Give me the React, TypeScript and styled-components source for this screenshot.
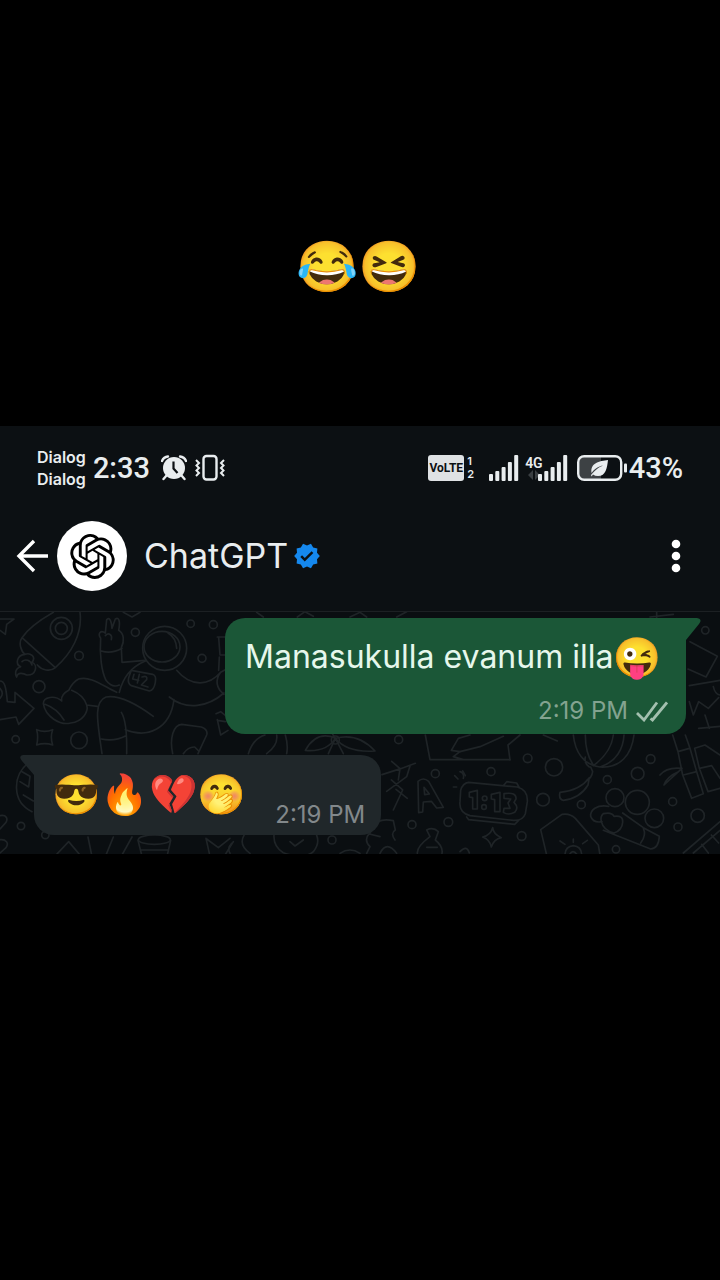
import React from "react";
import styled, { createGlobalStyle, css } from "styled-components";
import { SiOpenai } from "react-icons/si";
import { MdVerified } from "react-icons/md";

const GlobalStyle = createGlobalStyle`
  * { box-sizing: border-box; }
  body {
    margin: 0;
    background: #000;
    color: #e9edef;
    font-family: Inter, Roboto, "Noto Color Emoji", sans-serif;
  }
`;

const Page = styled.main`
  display: grid;
  grid-template-rows: 1fr auto 1fr;
  grid-template-columns: minmax(0, 1fr);
  min-height: 100vh;
`;

const Caption = styled.div`
  display: flex;
  align-items: flex-end;
  justify-content: center;
  padding: 0 3px 130px 0;
  font-size: 50px;
  line-height: 60px;
`;

const Phone = styled.section`
  background: #0c1013;
`;

const StatusBar = styled.div`
  display: flex;
  align-items: center;
  justify-content: space-between;
  padding: 20px 37px 22px;
`;

const StatusGroup = styled.div`
  display: flex;
  align-items: center;
`;

const Carriers = styled.div`
  display: flex;
  flex-direction: column;
  margin-right: 7px;
  font-size: 16px;
  font-weight: 600;
  line-height: 22px;
`;

const StatusText = styled.span`
  font-family: Roboto, sans-serif;
  font-size: 29px;
  font-weight: 500;
  line-height: 40px;
`;

const StatusIcon = styled.svg<{ $gap: number }>`
  display: block;
  margin-left: ${(p) => p.$gap}px;
`;

const Volte = styled.span`
  display: flex;
  justify-content: center;
  width: 36px;
  border-radius: 3px;
  background: #dfe2e4;
  color: #0c1013;
  font-family: Roboto, sans-serif;
  font-size: 12px;
  font-weight: 700;
  line-height: 26px;
`;

const SimSlots = styled.span`
  display: flex;
  flex-direction: column;
  margin-left: 3px;
  font-size: 11px;
  font-weight: 600;
  line-height: 13px;
`;

const NetworkType = styled.span`
  display: flex;
  flex-direction: column;
  align-items: center;
  margin: 0 -5px 0 6px;
  font-family: Roboto, sans-serif;
  font-size: 14px;
  font-weight: 600;
  line-height: 14px;
`;

const Header = styled.header`
  display: flex;
  align-items: center;
  padding: 9px 36px 20px 16px;
  border-bottom: 1px solid #1c2023;
`;

const IconButton = styled.button`
  display: flex;
  padding: 0;
  border: 0;
  background: none;
  color: #fff;
`;

const Avatar = styled.div`
  display: flex;
  align-items: center;
  justify-content: center;
  width: 70px;
  height: 70px;
  margin: 0 17px 0 8px;
  border-radius: 50%;
  background: #fff;
  color: #000;
`;

const Name = styled.h1`
  margin: 0;
  font-size: 34px;
  font-weight: 400;
  line-height: 44px;
`;

const Verified = styled.span`
  display: flex;
  flex: 1;
  margin-left: 5px;
  color: #1588ee;
`;

const Chat = styled.div`
  position: relative;
  display: flex;
  flex-direction: column;
  gap: 21px;
  overflow: hidden;
  padding: 6px 34px 19px;
  background: #0a0e11;
`;

const Wallpaper = styled.svg`
  position: absolute;
  inset: 0;
  width: 100%;
  height: 100%;
`;

const Bubble = styled.article<{ $sent?: boolean }>`
  position: relative;
  display: flex;
  border-radius: 20px;

  &::after {
    content: "";
    position: absolute;
    top: 0;
    width: 36px;
    height: 24px;
    background: inherit;
  }

  ${(p) =>
    p.$sent
      ? css`
          align-self: flex-end;
          flex-direction: column;
          gap: 14px;
          padding: 14px 18px 8px 20px;
          background: #1b5737;
          color: #e6f7ec;
          &::after {
            right: -15px;
            clip-path: path("M0 0H32Q38 1 34 6L21 22V24H0Z");
          }
        `
      : css`
          align-self: flex-start;
          gap: 29px;
          padding: 14px 16px 5px 18px;
          background: #20272a;
          &::after {
            left: -14px;
            clip-path: path("M36 0H3Q-2 1 2 6L14 20V24H36Z");
          }
        `}
`;

const MessageText = styled.p`
  display: flex;
  align-items: center;
  margin: 0;
  padding-right: 6px;
  font-size: 32px;
  line-height: 50px;
`;

/* Mirrored so that the open eye is on the left. */
const Emoji = styled.span`
  transform: scaleX(-1);
  font-size: 39px;
  line-height: 50px;
`;

const EmojiMessage = styled.p`
  margin: 0;
  padding-bottom: 11px;
  font-size: 39px;
  line-height: 50px;
`;

const Meta = styled.div<{ $sent?: boolean }>`
  display: flex;
  align-items: center;
  align-self: flex-end;
  gap: 8px;
  color: ${(p) => (p.$sent ? "#83a390" : "#82888b")};
  font-size: 24px;
  line-height: 30px;
`;

function SignalBars({ gap }: { gap: number }) {
  return (
    <StatusIcon $gap={gap} width="30" height="26" viewBox="0 0 30 26" fill="#e9edef" role="img" aria-label="Signal">
      <rect x="0" y="19" width="4" height="7" rx="1" />
      <rect x="6.3" y="16" width="4" height="10" rx="1" />
      <rect x="12.6" y="12" width="4" height="14" rx="1" />
      <rect x="18.9" y="7" width="4" height="19" rx="1" />
      <rect x="25.2" y="0" width="4" height="26" rx="1" />
    </StatusIcon>
  );
}

function Doodles() {
  return (
    <Wallpaper viewBox="0 0 720 242" preserveAspectRatio="xMidYMin slice" aria-hidden="true">
      <g fill="none" stroke="#1f2427" strokeWidth="5" strokeLinecap="round" strokeLinejoin="round">
        <g transform="translate(0 -7) scale(.33333)">
          {/* rocket */}
          <path d="M160 22C120 45 85 70 66 98L166 188C215 145 248 85 240 22M66 98C55 112 62 138 75 148M166 188C150 202 125 195 112 180" />
          <circle cx="184" cy="70" r="33" /><circle cx="184" cy="70" r="18" />
          <path d="M75 148C50 150 45 178 62 185C42 192 46 210 50 216C52 200 72 205 80 210C108 212 115 180 96 172C110 155 90 142 75 148M66 170C76 160 92 166 96 180" />
          <path d="M0 42H42L20 58L16 88L0 76M0 228C14 228 18 245 22 290L45 292V262L102 310L56 358L48 336L0 344M0 250C10 262 8 272 0 280" />
          {/* astronaut */}
          <path d="M302 100C292 85 302 74 316 84L320 44C326 36 334 42 336 70L346 42C356 36 362 46 356 76C372 85 374 108 364 128L366 172L436 166M302 100C298 150 305 200 318 226C330 242 345 246 358 240M316 92C326 82 338 88 334 104M304 138C325 145 345 142 366 130" />
          <circle cx="494" cy="130" r="66" /><ellipse cx="486" cy="125" rx="54" ry="46" /><path d="M504 84Q528 98 530 130M436 168C395 185 368 220 358 262M394 196L458 208Q470 212 466 232Q462 256 448 258L394 242Q382 236 386 218ZM402 208L398 222L416 226M418 208L412 234M426 216Q444 210 440 224L424 240L444 246" />
          <path d="M350 262C305 240 270 212 236 222C220 230 212 244 206 256C180 270 185 282 185 288C165 270 130 275 130 296C136 335 180 362 212 354C250 350 266 318 260 300L292 304M135 298Q170 310 192 345M215 256Q250 270 260 300" />
          <path d="M460 334C400 290 350 270 318 276C280 290 292 350 306 446M304 402Q345 410 378 392M364 322Q382 350 380 446M376 374C440 400 510 375 522 284M508 276C560 318 625 305 672 264M530 196C575 250 630 240 662 202C645 225 648 250 672 268M662 202L684 190M652 96H684M656 98L660 150H684M658 156L656 196M648 326L662 320L684 338M652 344L662 390L684 376M652 346L676 350" />
          <path d="M518 446C508 400 520 360 545 358L604 366Q625 374 620 390L594 446M550 446Q565 425 584 426L596 438M370 22L396 36L420 22" />
          <circle cx="237" cy="152" r="13" /><circle cx="117" cy="245" r="18" /><circle cx="47" cy="403" r="11" /><circle cx="237" cy="406" r="25" /><circle cx="406" cy="82" r="12" /><circle cx="572" cy="56" r="11" /><circle cx="640" cy="59" r="12" /><circle cx="606" cy="160" r="12" />
          <path d="M110 374Q134 384 158 374Q150 396 158 420Q134 412 110 420Q116 396 110 374Z" />
          {/* ball and lower edge */}
          <path d="M90 470C35 510 35 590 96 620M66 500L90 514L86 546L60 530M70 570L100 588M0 632C20 628 24 642 18 652L0 672M0 704C18 702 28 714 18 728L0 744M168 750L206 710L240 750M264 696L275 750M318 750L340 696M366 750L396 696" />
          <ellipse cx="463" cy="704" rx="48" ry="14" /><path d="M414 706L425 750M512 706L502 750M422 735H505M618 700L628 745M620 702L655 728L690 700M675 750L700 710" />
          <circle cx="63" cy="663" r="11" /><circle cx="136" cy="690" r="11" />
        </g>
        <g transform="translate(210 -7) scale(.33333)">
          <path d="M140 22L160 36M262 36L285 20L310 34M420 36L450 22L470 36M560 36L590 20M115 446Q130 400 165 390M170 446Q205 420 200 390M230 446Q235 420 226 390" />
          <path d="M376 400C340 384 310 394 286 436C330 440 360 425 376 400ZM376 400C420 388 460 400 495 438C440 442 400 430 376 400ZM376 400L355 446M376 400L400 446M376 400L368 388" /><circle cx="376" cy="405" r="12" /><circle cx="566" cy="404" r="12" />
          <path d="M646 390L660 464H900M724 436L745 400L780 390M724 436L750 440L730 455L760 464" />
        </g>
        <g transform="translate(460 -7) scale(.33333)">
          <path d="M150 465L144 420L180 390M0 440L60 425L130 394M250 390L292 408M570 36L640 28M590 22V38M690 110L772 154L738 216L684 192M688 242L780 226M760 245Q765 268 780 270M688 290L700 330L716 290L745 310L776 278M716 370L780 364M735 330L748 370" />
          <circle cx="736" cy="76" r="11" />
          {/* lantern */}
          <path d="M340 390C345 440 370 480 420 486C480 490 515 450 522 390M376 390C376 430 386 460 400 480M460 390C455 430 430 460 400 482M492 390C490 430 470 470 420 486M376 456Q372 476 388 486M392 486L398 500Q395 520 380 526M388 518Q360 556 300 562Q295 582 310 586Q360 580 384 540Z" />
          <circle cx="203" cy="460" r="13" /><circle cx="93" cy="500" r="12" /><circle cx="282" cy="487" r="26" /><circle cx="572" cy="462" r="13" /><circle cx="533" cy="506" r="19" /><circle cx="442" cy="524" r="12" /><circle cx="249" cy="584" r="19" /><circle cx="364" cy="599" r="12" /><circle cx="638" cy="590" r="12" /><circle cx="713" cy="632" r="20" /><circle cx="654" cy="666" r="12" /><circle cx="185" cy="693" r="13" /><circle cx="468" cy="733" r="11" />
          {/* digital clock */}
          <path d="M26 532L172 546Q204 554 202 590L196 626Q188 648 160 646L30 632Q-4 622 0 590L2 556Q8 534 26 532ZM20 636L26 644L164 658L176 646M132 540L140 530L170 534L178 548" />
          <path d="M28 562L52 556V612H38V578L28 576ZM94 568L120 562V620H104V584L94 582ZM132 566Q170 560 168 582L162 592Q178 608 164 622Q145 632 130 622L132 610L150 610L144 594L152 582L132 580Z" /><circle cx="74" cy="580" r="7" /><circle cx="72" cy="606" r="7" />
          <path d="M-16 512L-6 522M8 498L16 512M-20 546H-10" />
          <path d="M98 668Q100 688 124 698Q102 702 94 726Q90 704 68 696Q92 690 98 668Z" />
          {/* flower cup */}
          <circle cx="465" cy="578" r="27" /><circle cx="532" cy="592" r="36" /><circle cx="583" cy="640" r="28" />
          <path d="M446 604C410 598 390 615 392 634Q400 655 426 650M430 626Q455 620 462 634Q490 630 488 652Q486 676 462 684Q430 676 424 650Q420 635 430 626ZM488 624L550 668L598 694Q596 730 572 732L430 676M550 670Q560 690 542 714" />
          <path d="M260 750L242 674L306 628Q330 624 346 640L415 720L420 750M315 750Q315 725 340 722Q365 725 365 750M340 712V702M315 718L300 708M368 716L382 706M328 750Q338 730 352 750" />
          {/* bamboo */}
          <path d="M638 390L654 440L668 510L695 580L730 566L710 500L690 430L676 390M654 440L688 430M670 510L710 500M704 430L735 420L780 450M704 430L718 490L744 560L780 550M718 490L755 482L780 520M600 510Q620 485 666 490L612 540Q620 515 655 500" />
          <path d="M670 744L780 650M700 744L780 676M725 718L745 744M754 690L776 714M0 500Q14 504 10 520M0 740Q20 718 28 744" />
        </g>
        <g transform="translate(230 118) scale(.33333)">
          <path d="M456 134L512 116L556 100M485 94L510 116L505 150M470 184L530 140L540 108M484 150L518 180L490 240M498 178L532 205M566 248L564 154Q580 140 596 154L640 232L620 234L604 214L580 216L578 246ZM584 194L582 172L598 192Z" />
          <circle cx="616" cy="131" r="12" /><circle cx="546" cy="284" r="12" /><circle cx="655" cy="276" r="13" /><circle cx="306" cy="330" r="12" />
          <path d="M430 290Q445 262 490 272L496 300Q480 310 495 330M418 310Q400 330 420 350L410 370M430 290L418 312L450 320M450 370Q470 330 500 370M590 300Q610 290 625 305L616 330Q640 350 636 370M590 300L600 320Q560 350 562 370M590 352H622" />
          <path d="M42 316Q25 345 60 370M132 316Q130 350 160 368Q220 390 250 365Q270 340 260 316M180 335L195 348L220 330M5 340Q-10 355 0 370M330 370Q360 350 390 370" />
        </g>
      </g>
    </Wallpaper>
  );
}

export default function App() {
  return (
    <Page>
      <GlobalStyle />
      <Caption>😂😆</Caption>
      <Phone>
        <StatusBar>
          <StatusGroup>
            <Carriers>
              <span>Dialog</span>
              <span>Dialog</span>
            </Carriers>
            <StatusText>2:33</StatusText>
            <StatusIcon $gap={11} width="26" height="26" viewBox="0 0 26 26" role="img" aria-label="Alarm">
              <circle cx="13" cy="13" r="11" fill="#e9edef" />
              <path d="M1 6Q2.500 2 7 1.500M19 1.500Q23.500 2 25 6M5.500 20.500L2.500 24M20.500 20.500L23.500 24" fill="none" stroke="#e9edef" strokeWidth="2.400" strokeLinecap="round" />
              <path d="M12.500 6.500V13.500L16.500 18" fill="none" stroke="#0c1013" strokeWidth="2.200" />
            </StatusIcon>
            <StatusIcon $gap={8} width="30" height="28" viewBox="0 0 30 28" role="img" aria-label="Vibrate" fill="none" stroke="#e9edef">
              <rect x="8.500" y="2" width="13" height="23.500" rx="3" strokeWidth="2.400" />
              <path d="M1 6L4 9L1.500 11.500L4 14L1.500 16.500L4 19L1 22M29 6L26 9L28.500 11.500L26 14L28.500 16.500L26 19L29 22" strokeWidth="2" />
            </StatusIcon>
          </StatusGroup>
          <StatusGroup>
            <Volte>VoLTE</Volte>
            <SimSlots>
              <span>1</span>
              <span>2</span>
            </SimSlots>
            <SignalBars gap={15} />
            <NetworkType>
              4G
              <svg width="12" height="10" viewBox="0 0 12 10" fill="#3a3f42" aria-hidden="true">
                <path d="M0 5L5 0V10ZM12 5L7 0V10Z" />
              </svg>
            </NetworkType>
            <SignalBars gap={0} />
            <StatusIcon $gap={9} width="52" height="26" viewBox="0 0 52 26" role="img" aria-label="Battery saver">
              <path d="M8 2H24V24H8Q2 24 2 18V8Q2 2 8 2Z" fill="#3d4144" />
              <rect x="1.200" y="1.200" width="43" height="23.600" rx="6" fill="none" stroke="#e9edef" strokeWidth="2.400" />
              <rect x="47" y="8.500" width="3" height="9" rx="1" fill="#e9edef" />
              <path d="M31 5C30 13 29 21 21 21Q18 21 16 19.500L14.500 21.500L14 20C17 17 20 13 26 10.500C20 12 17 14.500 14.600 18C13 8 22 6 31 5Z" fill="#e9edef" />
            </StatusIcon>
            <StatusText>43%</StatusText>
          </StatusGroup>
        </StatusBar>
        <Header>
          <IconButton aria-label="Back">
            <svg width="33" height="34" viewBox="0 0 33 34" fill="none" stroke="currentColor" strokeWidth="3.400">
              <path d="M32 17H3M18 2L3 17L18 32" />
            </svg>
          </IconButton>
          <Avatar>
            <SiOpenai size={45} aria-hidden="true" />
          </Avatar>
          <Name>ChatGPT</Name>
          <Verified>
            <MdVerified size={28} aria-label="Verified" />
          </Verified>
          <IconButton aria-label="More options">
            <svg width="16" height="34" viewBox="0 0 16 34" fill="currentColor">
              <circle cx="8" cy="5" r="4.300" />
              <circle cx="8" cy="17" r="4.300" />
              <circle cx="8" cy="29" r="4.300" />
            </svg>
          </IconButton>
        </Header>
        <Chat>
          <Doodles />
          <Bubble $sent>
            <MessageText>
              Manasukulla evanum illa<Emoji>😜</Emoji>
            </MessageText>
            <Meta $sent>
              <time>2:19 PM</time>
              <svg width="32" height="21" viewBox="0 0 32 21" fill="none" stroke="#a3c0af" strokeWidth="2.800" role="img" aria-label="Delivered">
                <path d="M1 12L8 19L21 1.500M14.500 17.500L16.500 19L31 1.500" />
              </svg>
            </Meta>
          </Bubble>
          <Bubble>
            <EmojiMessage>😎🔥💔🤭</EmojiMessage>
            <Meta>
              <time>2:19 PM</time>
            </Meta>
          </Bubble>
        </Chat>
      </Phone>
    </Page>
  );
}
